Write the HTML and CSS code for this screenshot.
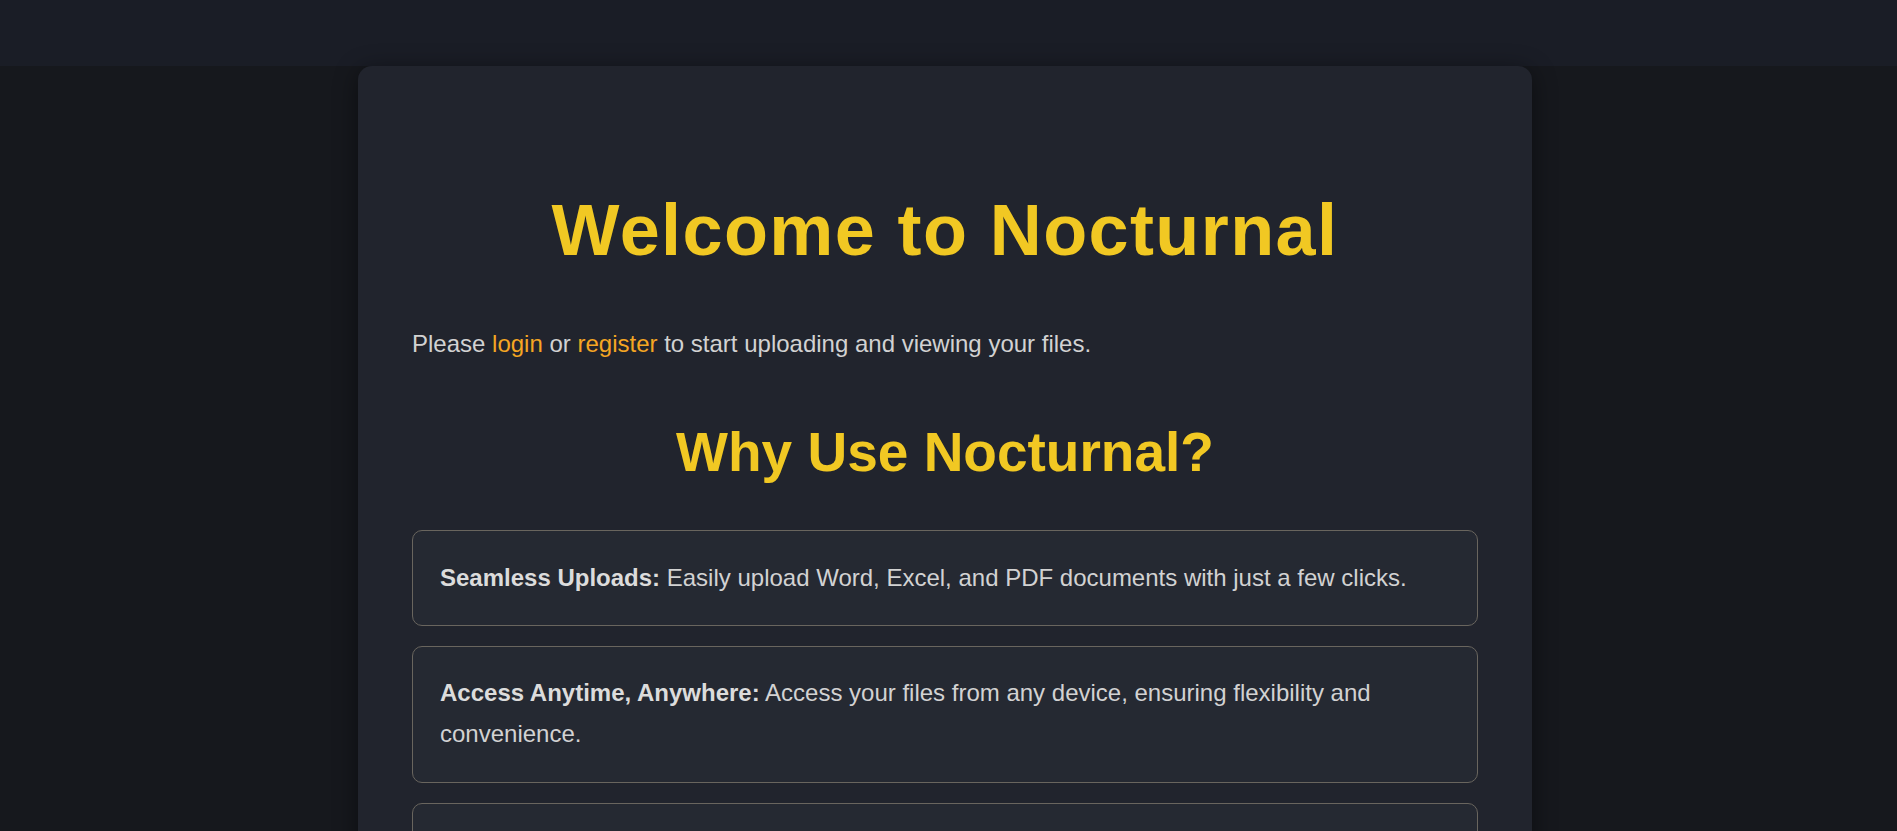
FILE: index.html
```html
<!DOCTYPE html>
<html>
<head>
    <title>Nocturnal</title>
    <link rel="stylesheet" href="styles.css">
</head>
<body>
    <div class="topbar"></div>
    <div class="main">
        <div class="card">
            <h1>Welcome to Nocturnal</h1>
            <p class="intro">Please <a href="#">login</a> or <a href="#">register</a> to start uploading and viewing your files.</p>

            <h2>Why Use Nocturnal?</h2>
            <div class="features">
                <div class="feature">
                    <strong>Seamless Uploads:</strong> Easily upload Word, Excel, and PDF documents with just a few clicks.
                </div>
                <div class="feature">
                    <strong>Access Anytime, Anywhere:</strong> Access your files from any device, ensuring flexibility and convenience.
                </div>
                <div class="feature">
                    <strong>Secure Storage:</strong> Your documents are stored safely and only you can see them.
                </div>
                <div class="feature">
                    <strong>Simple Viewing:</strong> Open and preview your files right in the browser.
                </div>
            </div>
        </div>
    </div>
</body>
</html>
```

FILE: styles.css
```css
body {
    font-family: "Liberation Sans", Arial, sans-serif;
    margin: 0px;
    padding: 0px;
    background-color: #16181d;
    color: #d2d2d2;
}
.topbar {
    height: 66px;
    background-color: #1a1d26;
}
.main {
    padding-right: 7px;
}
.card {
    width: 1174px;
    box-sizing: border-box;
    margin: 0 auto;
    padding: 54px;
    background-color: #21242d;
    border-radius: 14px;
    box-shadow: 0 4px 24px rgba(0, 0, 0, 0.45);
}
h1 {
    margin: 67px 0px 51px;
    font-size: 72px;
    line-height: 1.2;
    letter-spacing: 1.4px;
    text-align: center;
    color: #f1c823;
}
h2 {
    margin: 0px 0px 45px;
    font-size: 55px;
    line-height: 1.2;
    text-align: center;
    color: #f1c823;
}
.intro {
    margin: 0px 0px 54px;
    font-size: 24px;
    line-height: 1.7;
}
.intro a {
    color: #f5a623;
    text-decoration: none;
}
.feature {
    margin-bottom: 20px;
    padding: 26.5px 27px;
    font-size: 24px;
    line-height: 1.7;
    background-color: #252932;
    border: 1px solid #69655e;
    border-radius: 10px;
}
.feature strong {
    color: #dcdcdc;
}
```
